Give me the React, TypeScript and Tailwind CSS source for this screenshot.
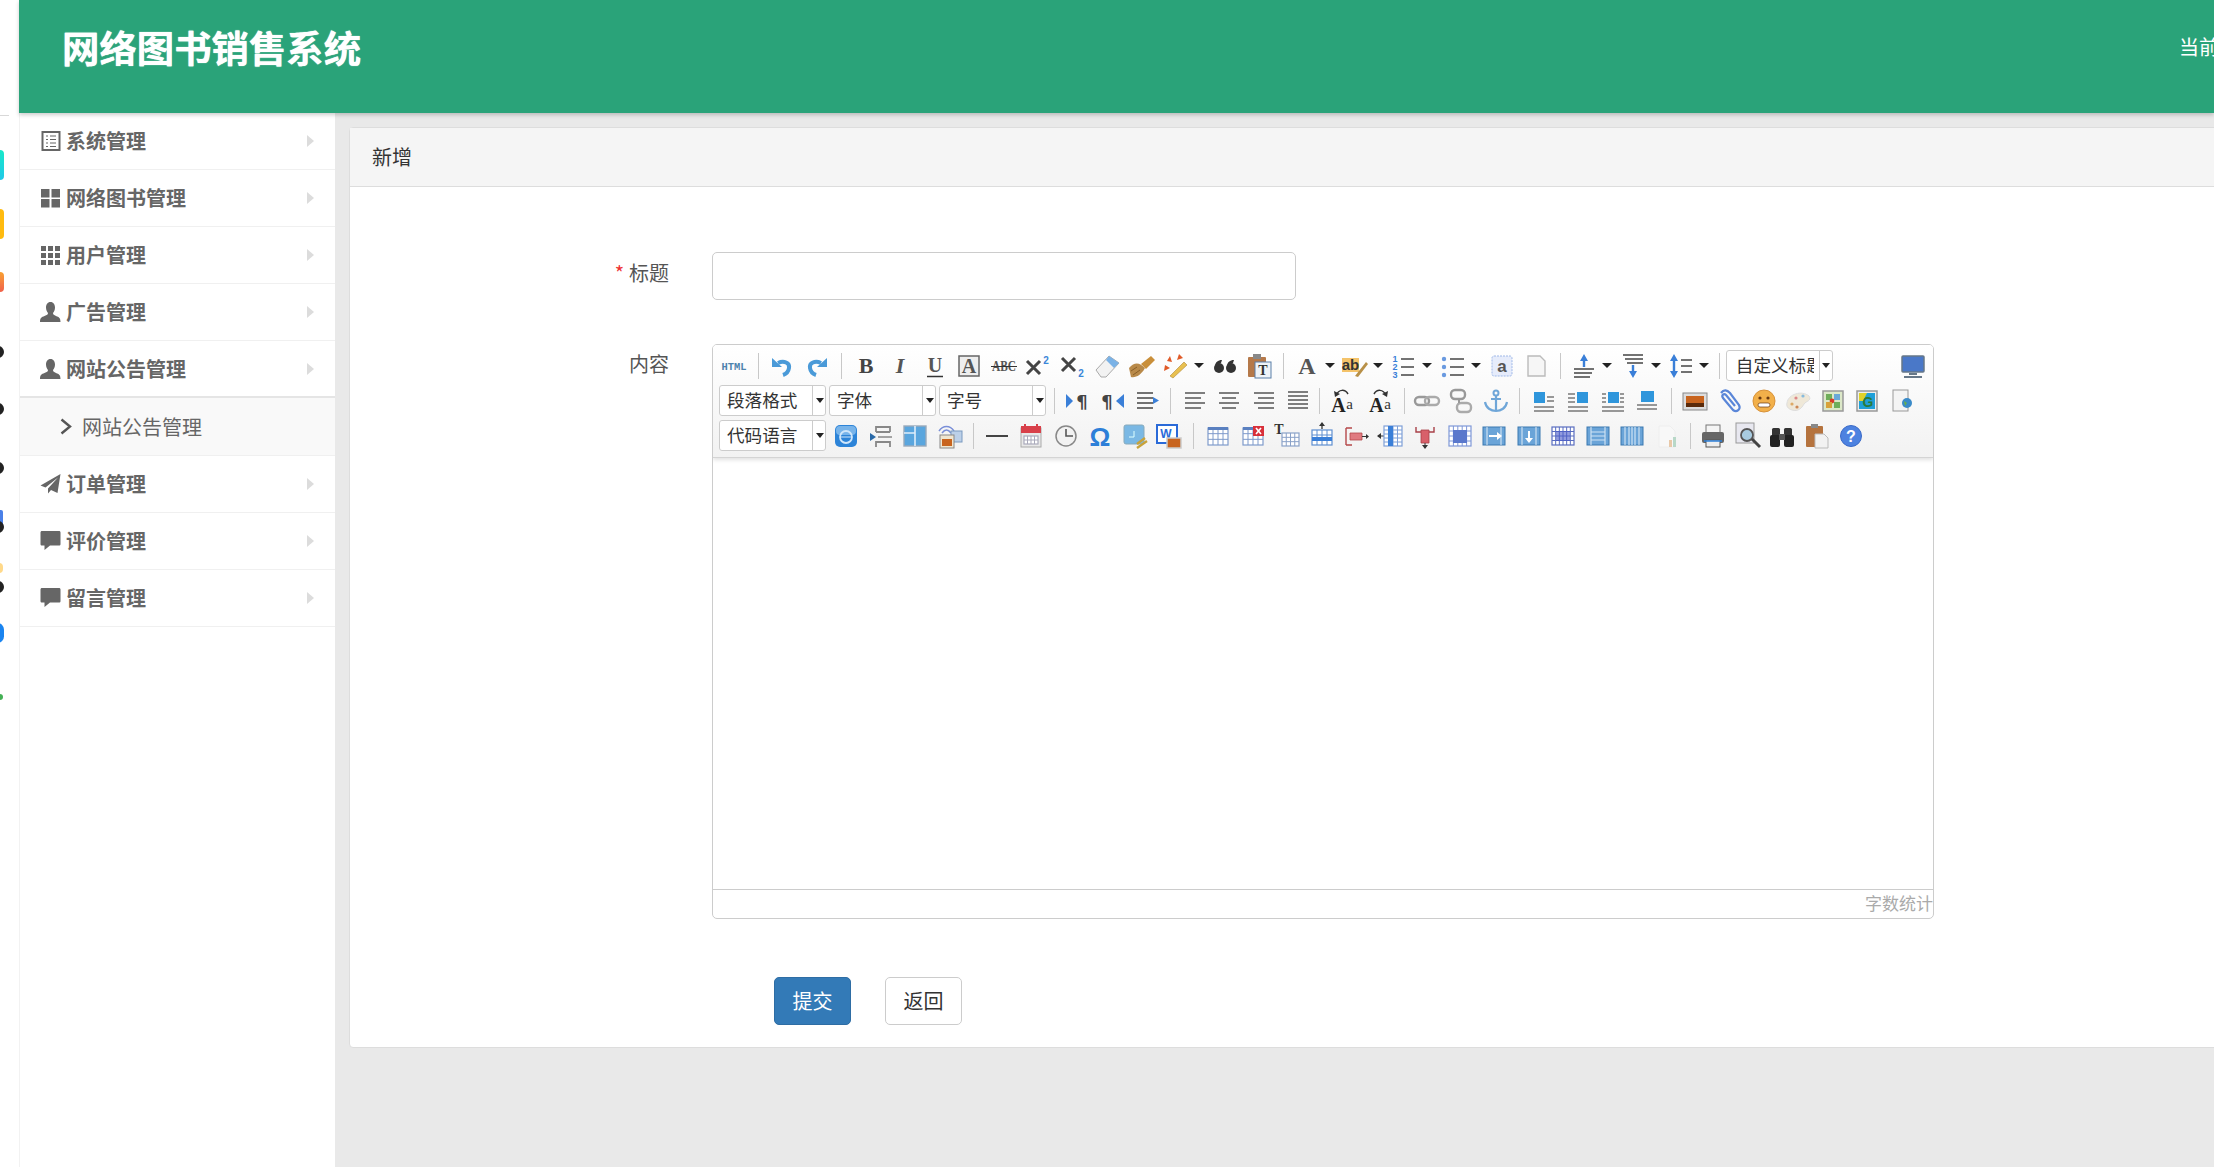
import React from "react";

const cjk = "font-['Noto_Sans_CJK_SC','Liberation_Sans',sans-serif]";

type IconProps = { children: React.ReactNode };

// toolbar glyphs are all drawn on a 28x28 box
const G = ({ children }: IconProps) => (
  <svg width="28" height="28" viewBox="0 0 28 28" fill="none">
    {children}
  </svg>
);

const Lines = ({ ys, x1 = 4, x2 = 24, c = "#555" }: { ys: number[]; x1?: number; x2?: number; c?: string }) => (
  <>
    {ys.map((y) => (
      <path key={y} d={`M${x1} ${y}H${x2}`} stroke={c} strokeWidth="1.6" />
    ))}
  </>
);

const Letter = ({ t, size = 20, c = "#444", style = "normal", weight = 700, y = 21 }: { t: string; size?: number; c?: string; style?: string; weight?: number; y?: number }) => (
  <text x="14" y={y} textAnchor="middle" fontSize={size} fontFamily="Liberation Serif" fontWeight={weight} fontStyle={style} fill={c}>
    {t}
  </text>
);

const grid = (x: number, y: number, w: number, h: number, cols: number, rows: number, c: string) => (
  <>
    <rect x={x} y={y} width={w} height={h} fill="#fff" stroke={c} strokeWidth="1.2" />
    {Array.from({ length: cols - 1 }).map((_, i) => (
      <path key={`c${i}`} d={`M${x + ((i + 1) * w) / cols} ${y}V${y + h}`} stroke={c} />
    ))}
    {Array.from({ length: rows - 1 }).map((_, i) => (
      <path key={`r${i}`} d={`M${x} ${y + ((i + 1) * h) / rows}H${x + w}`} stroke={c} />
    ))}
  </>
);

const tableIcon = (fill?: React.ReactNode) => (
  <G>
    {grid(4, 6, 20, 17, 4, 3, "#7f9bcb")}
    <rect x="4" y="5" width="20" height="3" fill="#5a80c0" />
    {fill}
  </G>
);

const filmIcon = (inner: React.ReactNode) => (
  <G>
    <rect x="3" y="5" width="22" height="18" fill="#6aa4d8" stroke="#3a78b0" />
    <path d="M7 5V23M21 5V23" stroke="#fff" strokeWidth=".8" />
    {inner}
  </G>
);

const layoutIcon = (box: [number, number, number, number], ys: [number, number, number][]) => (
  <G>
    {ys.map(([y, a, b]) => (
      <path key={y + "" + a} d={`M${a} ${y}H${b}`} stroke="#777" strokeWidth="1.5" />
    ))}
    <rect x={box[0]} y={box[1]} width={box[2]} height={box[3]} fill="#2f96dc" />
  </G>
);

const serifA = (
  <>
    <text x="10.5" y="25" textAnchor="middle" fontSize="20" fontWeight="700" fontFamily="Liberation Serif" fill="#222">A</text>
    <text x="21.5" y="22" textAnchor="middle" fontSize="15" fontFamily="Liberation Serif" fill="#333">a</text>
  </>
);

const icons: Record<string, React.ReactNode> = {
  html: (
    <svg width="28" height="28" viewBox="0 0 28 28">
      <text x="14" y="18" textAnchor="middle" fontSize="10" fontWeight="700" fontFamily="Liberation Mono" fill="#4d83ad" textLength="25" lengthAdjust="spacingAndGlyphs">HTML</text>
    </svg>
  ),
  undo: (
    <G>
      <path d="M10 11C16 8 22 11 21 16C20.500 19.500 18 22 15 23" stroke="#4a9ad8" strokeWidth="4" />
      <path d="M4 6V15H14Z" fill="#4a9ad8" />
    </G>
  ),
  redo: (
    <G>
      <path d="M18 11C12 8 6 11 7 16C7.500 19.500 10 22 13 23" stroke="#4a9ad8" strokeWidth="4" />
      <path d="M24 6V15H14Z" fill="#4a9ad8" />
    </G>
  ),
  bold: <G><Letter t="B" size={22} /></G>,
  italic: <G><Letter t="I" size={22} style="italic" c="#555" /></G>,
  underline: <G><Letter t="U" size={20} y={20} c="#555" weight={700} /><path d="M6 24.500H22" stroke="#333" strokeWidth="1.6" /></G>,
  fontborder: <G><rect x="4" y="4" width="20" height="20" fill="#eee" stroke="#666" strokeWidth="1.5" /><Letter t="A" size={20} y={21} c="#555" /></G>,
  strike: <G><text x="14" y="19" textAnchor="middle" fontSize="14" fontWeight="700" fontFamily="Liberation Serif" fill="#555" textLength="24" lengthAdjust="spacingAndGlyphs">ABC</text><path d="M1 14.500H27" stroke="#333" /></G>,
  sup: <G><path d="M3 9L16 22M16 9L3 22" stroke="#444" strokeWidth="3" /><text x="22" y="12" fontSize="10" fontWeight="700" fontFamily="Liberation Sans" fill="#3a86d8" textAnchor="middle">2</text></G>,
  sub: <G><path d="M3 6L16 19M16 6L3 19" stroke="#444" strokeWidth="3" /><text x="22" y="25" fontSize="10" fontWeight="700" fontFamily="Liberation Sans" fill="#3a86d8" textAnchor="middle">2</text></G>,
  eraser: <G><path d="M3 18L16 4L26 11L13 25H8Z" fill="#f2f2f2" stroke="#aaa" /><path d="M13 8L16 4L26 11L21 16Z" fill="#7ab2e6" /></G>,
  brush: <G><path d="M1 16C7 9 12 11 17 16C13 23 8 26 3 25Z" fill="#b98a4a" /><path d="M3 19L9 15M5 23L12 18" stroke="#8a6028" /><path d="M13 12L23 4L27 8L18 17Z" fill="#c98f3a" /></G>,
  magic: <G><path d="M8 24L22 10L25 13L11 26Z" fill="#e8c050" stroke="#b0883a" strokeWidth=".6" /><path d="M8 4L10 10L5 9ZM3 13L8 16L2 19ZM17 2L21 6L15 8Z" fill="#e05a28" /></G>,
  quote: (
    <G>
      <circle cx="8" cy="16" r="5" fill="#333" />
      <path d="M4 15C4 10 7 8 11 8L10 11C8 11 7 13 7 15Z" fill="#333" />
      <circle cx="20" cy="16" r="5" fill="#333" />
      <path d="M16 15C16 10 19 8 23 8L22 11C20 11 19 13 19 15Z" fill="#333" />
    </G>
  ),
  paste: <G><rect x="3" y="5" width="18" height="20" rx="1" fill="#b5794a" /><rect x="8" y="2" width="8" height="5" fill="#888" /><rect x="10" y="10" width="16" height="16" fill="#eef3f8" stroke="#5a7fa8" /><text x="18" y="23" textAnchor="middle" fontSize="14" fontWeight="700" fontFamily="Liberation Serif" fill="#333">T</text></G>,
  fontcolor: <G><Letter t="A" size={24} y={22} c="#555" /></G>,
  highlight: <G><rect x="1" y="6" width="17" height="14" fill="#f4c36a" /><text x="9.500" y="18" textAnchor="middle" fontSize="15" fontWeight="700" fontFamily="Liberation Sans" fill="#333">ab</text><path d="M14 24L25 10L27 12L17 25Z" fill="#b89048" /></G>,
  ol: <G><text x="5" y="10" fontSize="9" fontWeight="700" fill="#3a7fd8" fontFamily="Liberation Sans" textAnchor="middle">1</text><text x="5" y="18" fontSize="9" fontWeight="700" fill="#3a7fd8" fontFamily="Liberation Sans" textAnchor="middle">2</text><text x="5" y="26" fontSize="9" fontWeight="700" fill="#3a7fd8" fontFamily="Liberation Sans" textAnchor="middle">3</text><Lines ys={[7, 15, 23]} x1={11} x2={24} c="#444" /></G>,
  ul: <G><circle cx="5" cy="7" r="2.2" fill="#6a9ae0" /><circle cx="5" cy="15" r="2.2" fill="#6a9ae0" /><circle cx="5" cy="23" r="2.2" fill="#6a9ae0" /><Lines ys={[7, 15, 23]} x1={11} x2={25} c="#444" /></G>,
  selectall: <G><rect x="4" y="4" width="20" height="20" rx="2" fill="#e6ecfb" stroke="#9fb8e8" strokeDasharray="2 1" /><text x="14" y="20" textAnchor="middle" fontSize="17" fontWeight="700" fontFamily="Liberation Sans" fill="#555">a</text></G>,
  doc: <G><path d="M6 4H18L23 9V24H6Z" fill="#f6f6f6" stroke="#bbb" strokeWidth="1.4" /></G>,
  rowtop: <G><path d="M14 2L18 9H15.200V15H12.800V9H10Z" fill="#3a7fd8" /><path d="M4 17H24M4 21H22M4 25H20" stroke="#444" strokeWidth="1.6" /></G>,
  rowbottom: <G><path d="M4 3H24M6 7H24M8 11H24" stroke="#444" strokeWidth="1.6" /><path d="M14 26L18 19H15.200V13H12.800V19H10Z" fill="#3a7fd8" /></G>,
  lineheight: <G><path d="M7 2L11 9H8.200V19H11L7 26L3 19H5.800V9H3Z" fill="#3a7fd8" /><Lines ys={[8, 14, 20]} x1={14} x2={25} c="#444" /></G>,
  full: <G><rect x="3" y="4" width="22" height="16" rx="1" fill="#4a78c8" stroke="#678" strokeWidth="1.5" /><path d="M10 22H18M5 25H23" stroke="#678" strokeWidth="2" /></G>,
  ltr: <G><path d="M2 7L9 14L2 21Z" fill="#3a7fd8" /><text x="18" y="21" textAnchor="middle" fontSize="18" fontWeight="700" fontFamily="DejaVu Sans" fill="#444">¶</text></G>,
  rtl: <G><text x="9" y="21" textAnchor="middle" fontSize="18" fontWeight="700" fontFamily="DejaVu Sans" fill="#444">¶</text><path d="M26 7L18 14L26 21Z" fill="#3a7fd8" /></G>,
  indent: <G><Lines ys={[6, 11, 16, 21]} x1={4} x2={20} c="#444" /><path d="M20 10L26 13.500L20 17Z" fill="#3a7fd8" /></G>,
  left: <G><path d="M4 6H24M4 11H20M4 16H24M4 21H20" stroke="#555" strokeWidth="1.6" /></G>,
  center: <G><Lines ys={[6, 16]} x1={4} x2={24} c="#555" /><Lines ys={[11, 21]} x1={7} x2={21} c="#555" /></G>,
  right: <G><Lines ys={[6, 16]} x1={4} x2={24} c="#555" /><Lines ys={[11, 21]} x1={8} x2={24} c="#555" /></G>,
  justify: <G><Lines ys={[5, 9, 13, 17, 21]} x1={4} x2={24} c="#555" /></G>,
  upper: <G>{serifA}<path d="M8 8C11 2 17 2 20 7" stroke="#333" fill="none" strokeWidth="1.5" /><path d="M6 4L7 10L12 7Z" fill="#333" /></G>,
  lower: <G>{serifA}<path d="M8 7C11 2 17 2 20 8" stroke="#333" fill="none" strokeWidth="1.5" /><path d="M22 4L21 10L16 7Z" fill="#333" /></G>,
  link: <G><rect x="2" y="10" width="14" height="8" rx="4" stroke="#999" strokeWidth="2.4" /><rect x="12" y="10" width="14" height="8" rx="4" stroke="#aaa" strokeWidth="2.4" /></G>,
  unlink: <G><rect x="4" y="3" width="14" height="9" rx="4" stroke="#999" strokeWidth="2.4" /><rect x="10" y="16" width="14" height="9" rx="4" stroke="#aaa" strokeWidth="2.4" /><path d="M12 12V16" stroke="#999" strokeWidth="2" /></G>,
  anchor: <G><circle cx="14" cy="6" r="2.500" stroke="#6fa6d8" strokeWidth="2" /><path d="M14 8V24M9 12H19M3 15C4 21 9 24 14 24C19 24 24 21 25 15" stroke="#6fa6d8" strokeWidth="2.2" /></G>,
  floatLeft: layoutIcon([4, 5, 11, 11], [[20, 4, 24], [24, 4, 24], [10, 17, 24], [14, 17, 24]]),
  floatRight: layoutIcon([13, 5, 11, 11], [[20, 4, 24], [24, 4, 24], [7, 4, 11], [11, 4, 11], [15, 4, 11]]),
  floatCenter: layoutIcon([9, 5, 11, 11], [[20, 3, 25], [24, 3, 25], [7, 3, 7], [11, 3, 7], [15, 3, 7], [7.100, 21, 25], [11.100, 21, 25], [15.100, 21, 25]]),
  floatNone: layoutIcon([8, 4, 13, 11], [[18, 4, 24], [22, 4, 24]]),
  image: <G><rect x="2" y="6" width="24" height="17" fill="#ddd" stroke="#888" /><rect x="5" y="9" width="18" height="11" fill="#c8641e" /><path d="M5 16H23V20H5Z" fill="#5a2a0a" /></G>,
  attach: <G><path d="M6 6C9 2 12 3 15 6L24 18C26 22 22 26 18 23L8 11C6 8 9 6 11 8L20 19" stroke="#5a86d8" strokeWidth="2.2" /></G>,
  emoji: <G><circle cx="14" cy="14" r="11" fill="#f2b04a" stroke="#d8923a" /><circle cx="10" cy="11" r="1.600" fill="#6a3a10" /><circle cx="18" cy="11" r="1.600" fill="#6a3a10" /><rect x="8" y="16" width="12" height="4" rx="2" fill="#fff" stroke="#6a3a10" strokeWidth=".7" /></G>,
  palette: <G><path d="M3 16C4 7 18 3 25 9C28 14 22 14 20 17C18 21 14 25 8 23C4 22 2 19 3 16Z" fill="#efe8d8" stroke="#ddd" /><circle cx="12" cy="11" r="1.600" fill="#d88" /><circle cx="19" cy="9" r="1.600" fill="#8bd" /><circle cx="8" cy="17" r="1.600" fill="#da6" /><circle cx="13" cy="20" r="1.600" fill="#c85" /></G>,
  map: <G><rect x="4" y="4" width="20" height="20" fill="#dce8c8" stroke="#999" strokeWidth="1.5" /><path d="M7 7H13V13H7ZM15 15H21V21H15Z" fill="#6fae5a" /><path d="M15 7H21V13H15Z" fill="#6aa8d8" /><circle cx="13" cy="14" r="2.400" fill="#d83a2a" /><path d="M7 15H13V21H7Z" fill="#d8a23a" /></G>,
  gmap: <G><rect x="4" y="4" width="20" height="20" fill="#eee" stroke="#999" strokeWidth="1.5" /><rect x="6" y="6" width="16" height="16" fill="#1fa0d8" /><path d="M6 6H14L10 14H6Z" fill="#e0d22a" /><text x="15" y="20" textAnchor="middle" fontSize="14" fontWeight="700" fontFamily="Liberation Sans" fill="#2a7a3a">G</text></G>,
  iframe: <G><rect x="5" y="3" width="15" height="21" fill="#f4f4f4" stroke="#999" /><circle cx="19" cy="16" r="5" fill="#3a8ac8" /><path d="M16 14L19 16L17 19Z" fill="#6ab04a" /></G>,
  webapp: <G><rect x="3" y="3" width="22" height="22" rx="5" fill="#2d84d8" /><rect x="4" y="4" width="20" height="9" rx="4" fill="#78b4ea" /><circle cx="14" cy="15" r="6" stroke="#cfe6fa" strokeWidth="1.8" /><path d="M8 15H20" stroke="#cfe6fa" /></G>,
  pagebreak: <G><path d="M9 10V5H23V10M9 10H23" stroke="#888" strokeWidth="1.8" /><path d="M9 25V20H23V25" stroke="#888" strokeWidth="1.8" /><path d="M11 15H25" stroke="#888" strokeWidth="1.6" /><path d="M3 11L9 15L3 19Z" fill="#2a6aa8" /></G>,
  template: <G><rect x="3" y="4" width="22" height="20" fill="#5aa6de" stroke="#9ab" strokeWidth="1.4" /><path d="M14 4V24M3 11H14" stroke="#dfeefa" strokeWidth="1.6" /></G>,
  wifi: <G><path d="M3 9C7 3 14 3 18 9M6 11C9 7 12 7 15 11" stroke="#7a8fd8" strokeWidth="1.5" /><rect x="15" y="9" width="11" height="11" fill="#bcd0e8" stroke="#7a9ac0" /><rect x="4" y="13" width="14" height="13" fill="#f0e6d0" stroke="#888" /><rect x="6" y="17" width="10" height="7" fill="#c8641e" /></G>,
  hr: <G><path d="M3 14H25" stroke="#444" strokeWidth="2" /></G>,
  date: <G><rect x="4" y="6" width="20" height="19" fill="#e8e8e8" stroke="#aaa" /><rect x="4" y="4" width="20" height="7" fill="#d8404a" /><path d="M8 2V7M20 2V7" stroke="#d8404a" strokeWidth="2" />{grid(7, 14, 14, 8, 4, 2, "#aab")}</G>,
  clock: <G><circle cx="14" cy="14" r="10" fill="#f2f2f2" stroke="#888" strokeWidth="1.5" /><path d="M14 7V14H21" stroke="#555" strokeWidth="1.6" /></G>,
  omega: <G><text x="14" y="24" textAnchor="middle" fontSize="26" fontWeight="700" fontFamily="Liberation Sans" fill="#2d7fd8">Ω</text></G>,
  scrawl: <G><rect x="3" y="3" width="20" height="19" rx="2" fill="#7ab8e4" stroke="#8ab" /><path d="M8 15H13V9" stroke="#dff" /><path d="M16 22L24 16M16 26L26 19" stroke="#c8a23a" strokeWidth="2.4" /></G>,
  word: <G><rect x="2" y="3" width="20" height="18" fill="#fff" stroke="#2a6ad8" strokeWidth="2" /><text x="11" y="16" textAnchor="middle" fontSize="12" fontWeight="700" fontFamily="Liberation Sans" fill="#2a6ad8">W</text><rect x="12" y="16" width="14" height="10" fill="#c8641e" stroke="#ccc" strokeWidth="1.5" /></G>,
  table: tableIcon(),
  tabledel: tableIcon(<><rect x="14" y="4" width="11" height="10" fill="#d8303a" /><path d="M17 6L22 12M22 6L17 12" stroke="#fff" strokeWidth="1.6" /></>),
  tabletitle: <G><text x="6" y="12" textAnchor="middle" fontSize="14" fontWeight="700" fontFamily="Liberation Serif" fill="#333">T</text>{grid(9, 11, 17, 13, 4, 3, "#8aa2c8")}</G>,
  rowadd: <G><path d="M14 1V7" stroke="#333" strokeWidth="1.3" /><path d="M11 4L14 0L17 4Z" fill="#333" />{grid(4, 8, 20, 15, 4, 3, "#5f8fd0")}<rect x="4" y="15" width="20" height="4" fill="#3a7fd8" /></G>,
  rowdel: <G><path d="M4 6V23M4 6H10M4 23H10" stroke="#b5484a" strokeWidth="1.4" /><path d="M8 11H20V18H8Z" fill="#e07a80" stroke="#b5484a" strokeWidth=".8" /><path d="M20 14.500H26" stroke="#333" /><path d="M24 12L27 14.500L24 17Z" fill="#333" /></G>,
  coladd: <G><path d="M7 14H1" stroke="#333" /><path d="M4 11L0 14L4 17Z" fill="#333" />{grid(7, 4, 18, 20, 4, 5, "#7fa0d8")}<rect x="11" y="4" width="5" height="20" fill="#3a7fd8" /></G>,
  coldel: <G><path d="M5 5V10H23V5" stroke="#a84048" strokeWidth="1.4" /><path d="M10 8H18V21H10Z" fill="#d8606a" stroke="#a84048" strokeWidth=".8" /><path d="M14 21V26" stroke="#333" /><path d="M11 23L14 27L17 23Z" fill="#333" /></G>,
  merge: <G>{grid(3, 4, 22, 20, 5, 4, "#7f98d8")}<rect x="7" y="8" width="14" height="13" fill="#5a78cc" /></G>,
  mergeR: filmIcon(<><path d="M9 14H19" stroke="#fff" strokeWidth="2" /><path d="M17 10L22 14L17 18Z" fill="#fff" /></>),
  mergeD: filmIcon(<><path d="M14 9V18" stroke="#fff" strokeWidth="2" /><path d="M10 16L14 21L18 16Z" fill="#fff" /></>),
  split: <G>{grid(3, 5, 22, 18, 6, 4, "#5a6ec0")}<rect x="7" y="9" width="14" height="10" fill="#4a5ac8" opacity=".6" /></G>,
  splitR: filmIcon(<path d="M7 10H21M7 14H21M7 18H21" stroke="#cfe4f6" strokeWidth="1.2" />),
  splitC: filmIcon(<path d="M11 5V23M14 5V23M17 5V23" stroke="#cfe4f6" strokeWidth="1.2" />),
  chart: <G><path d="M6 4H17L22 9V25H6Z" fill="#f8f8f8" stroke="#eee" /><rect x="16" y="18" width="3" height="7" fill="#e8c8a8" /><rect x="20" y="15" width="3" height="10" fill="#b8d8c8" /></G>,
  print: <G><rect x="7" y="3" width="14" height="8" fill="#f4f4f4" stroke="#777" /><rect x="3" y="10" width="22" height="11" rx="2" fill="#666" /><rect x="7" y="18" width="14" height="7" fill="#eee" stroke="#555" /><path d="M5 19H23" stroke="#2d7fd8" strokeWidth="1.5" /></G>,
  preview: <G><rect x="2" y="1" width="18" height="20" fill="#e8e8f0" stroke="#999" /><circle cx="13" cy="13" r="6" fill="#a8cbe0" stroke="#555" strokeWidth="1.8" /><path d="M18 17L26 25" stroke="#444" strokeWidth="3" /></G>,
  search: <G><rect x="4" y="6" width="8" height="9" rx="1.500" fill="#333" /><rect x="16" y="6" width="8" height="9" rx="1.500" fill="#333" /><rect x="2" y="13" width="10" height="12" rx="2" fill="#222" /><rect x="16" y="13" width="10" height="12" rx="2" fill="#222" /><rect x="11" y="12" width="6" height="6" fill="#555" /></G>,
  clip: <G><rect x="3" y="4" width="17" height="21" rx="1" fill="#b5733e" /><rect x="8" y="2" width="7" height="4" fill="#888" /><path d="M12 12H21L25 16V26H12Z" fill="#f2f2f2" stroke="#bbb" /></G>,
  help: <G><circle cx="14" cy="14" r="10.500" fill="#4d82e0" stroke="#3a6ac8" /><text x="14" y="20" textAnchor="middle" fontSize="16" fontWeight="700" fontFamily="Liberation Sans" fill="#fff">?</text></G>,
};

const Btn = ({ name, wide }: { name: string; wide?: boolean }) => (
  <div className={`flex h-[34px] shrink-0 items-center justify-center ${wide ? "w-[38px]" : "w-[34.5px]"}`}>{icons[name]}</div>
);

const Combo = ({ name }: { name: string }) => (
  <div className="flex h-[34px] w-[48.6px] shrink-0 items-center pl-[3px]">
    {icons[name]}
    <span className="ml-[4px] h-0 w-0 border-x-[5px] border-t-[5px] border-x-transparent border-t-[#222]" />
  </div>
);

const Sep = ({ w = 13.4 }: { w?: number }) => (
  <div className="flex shrink-0 justify-center" style={{ width: w }}>
    <div className="h-[26px] w-px bg-[#c8c8c8]" />
  </div>
);

const Pick = ({ label, custom }: { label: string; custom?: boolean }) => (
  <div className="mr-[3px] flex h-[31px] w-[107px] shrink-0 items-center rounded-[3px] border border-[#ccc] bg-white text-[17.6px] text-[#333]">
    <span className={`min-w-0 flex-1 overflow-hidden whitespace-nowrap ${custom ? "mr-[5px] ml-[9px]" : "pl-[7px]"}`}>{label}</span>
    <span className="flex h-full w-[13px] shrink-0 items-center justify-center border-l border-[#ccc] pl-[1px]">
      <span className="h-0 w-0 border-x-[4px] border-t-[5px] border-x-transparent border-t-[#222]" />
    </span>
  </div>
);

const Toolbar = () => (
  <div className="h-[113px] border-b border-[#d4d4d4] bg-gradient-to-b from-white to-[#f2f2f2] pt-[3px] pl-[4px] shadow-[0_2px_4px_rgba(0,0,0,0.12)]">
    <div className="flex h-[35px] items-center">
      <Btn name="html" />
      <Sep />
      <Btn name="undo" /><Btn name="redo" />
      <Sep w={14.5} />
      {["bold", "italic", "underline", "fontborder", "strike", "sup", "sub", "eraser", "brush"].map((n) => <Btn key={n} name={n} />)}
      <Combo name="magic" />
      <Btn name="quote" /><Btn name="paste" />
      <Sep />
      <Combo name="fontcolor" /><Combo name="highlight" /><Combo name="ol" /><Combo name="ul" />
      <Btn name="selectall" /><Btn name="doc" />
      <Sep w={14} />
      <Combo name="rowtop" /><Combo name="rowbottom" /><Combo name="lineheight" />
      <Sep w={12.8} />
      <Pick label="自定义标题" custom />
      <div className="ml-[60px]"><Btn name="full" /></div>
    </div>
    <div className="flex h-[35px] items-center pl-[2px]">
      <Pick label="段落格式" /><Pick label="字体" /><Pick label="字号" />
      <Sep w={11.7} />
      <Btn name="ltr" /><Btn name="rtl" /><Btn name="indent" />
      <Sep w={13.5} />
      <Btn name="left" /><Btn name="center" /><Btn name="right" /><Btn name="justify" />
      <Sep w={7.3} />
      <Btn name="upper" wide /><Btn name="lower" wide />
      <Sep w={10.7} />
      <Btn name="link" /><Btn name="unlink" /><Btn name="anchor" />
      <Sep w={13.5} />
      <Btn name="floatLeft" /><Btn name="floatRight" /><Btn name="floatCenter" /><Btn name="floatNone" />
      <Sep w={13} />
      <Btn name="image" /><Btn name="attach" /><Btn name="emoji" /><Btn name="palette" /><Btn name="map" /><Btn name="gmap" /><Btn name="iframe" />
    </div>
    <div className="flex h-[35px] items-center pl-[2px]">
      <Pick label="代码语言" />
      <Btn name="webapp" /><Btn name="pagebreak" /><Btn name="template" /><Btn name="wifi" />
      <Sep w={12.7} />
      {["hr", "date", "clock", "omega", "scrawl", "word"].map((n) => <Btn key={n} name={n} />)}
      <Sep w={14.5} />
      {["table", "tabledel", "tabletitle", "rowadd", "rowdel", "coladd", "coldel", "merge", "mergeR", "mergeD", "split", "splitR", "splitC", "chart"].map((n) => <Btn key={n} name={n} />)}
      <Sep w={12} />
      {["print", "preview", "search", "clip", "help"].map((n) => <Btn key={n} name={n} />)}
    </div>
  </div>
);

// glyphicon-style menu icons
const menuIcons: Record<string, React.ReactNode> = {
  list: (
    <svg width="20" height="20" viewBox="0 0 20 20">
      <rect x="1.5" y="1" width="17" height="18" fill="none" stroke="#666" strokeWidth="2" />
      <path d="M5 5H7M9 5H15M5 8.5H7M9 8.5H15M5 12H7M9 12H15M5 15.5H7M9 15.5H15" stroke="#666" />
    </svg>
  ),
  large: (
    <svg width="20" height="20" viewBox="0 0 20 20" fill="#666">
      <rect x="0" y="1" width="8.5" height="8.5" /><rect x="10.5" y="1" width="8.5" height="8.5" />
      <rect x="0" y="11" width="8.5" height="8.5" /><rect x="10.5" y="11" width="8.5" height="8.5" />
    </svg>
  ),
  small: (
    <svg width="20" height="20" viewBox="0 0 20 20" fill="#666">
      {[0, 7, 14].map((x) => [1, 8, 15].map((y) => <rect key={`${x}-${y}`} x={x} y={y} width="5" height="5" />))}
    </svg>
  ),
  user: (
    <svg width="21" height="20" viewBox="0 0 21 20" fill="#666">
      <path d="M10.5 0C13.5 0 15 2.5 15 5.5C15 8 14 10 13 11C13 12.5 14 13 16 14C19 15 20.5 16 20.5 20H0C0 16 1.5 15 4.5 14C7 13 8 12.5 8 11C7 10 6 8 6 5.5C6 2.5 7.5 0 10.5 0Z" />
    </svg>
  ),
  send: (
    <svg width="21" height="20" viewBox="0 0 21 20" fill="#666">
      <path d="M20.5 0L0.5 11.5L5.5 13.5L18 3.5L8 14.5V19.5L11 16L17.5 19Z" />
    </svg>
  ),
  comment: (
    <svg width="21" height="20" viewBox="0 0 21 20" fill="#666">
      <path d="M2 0H19C20 0 20.5 .6 20.5 1.5V13C20.5 14 20 14.5 19 14.5H10L4.5 19V14.5H2C1 14.5 .5 14 .5 13V1.5C.5 .6 1 0 2 0Z" />
    </svg>
  ),
};

const menu = [
  { icon: "list", label: "系统管理" },
  { icon: "large", label: "网络图书管理" },
  { icon: "small", label: "用户管理" },
  { icon: "user", label: "广告管理" },
  { icon: "user", label: "网站公告管理", open: true },
  { icon: "send", label: "订单管理" },
  { icon: "comment", label: "评价管理" },
  { icon: "comment", label: "留言管理" },
];

const MenuItem = ({ icon, label, open }: { icon: string; label: string; open?: boolean }) => (
  <>
    <div className={`flex h-[57.1px] items-center pl-[20px] ${open ? "border-b-2 border-[#e5e5e5]" : "border-b border-[#f0f0f0]"}`}>
      <span className="flex w-[21px] shrink-0 justify-center">{menuIcons[icon]}</span>
      <span className="ml-[5px] text-[20px] font-bold text-[#666]">{label}</span>
      <span className="mr-[21px] ml-auto h-0 w-0 border-y-[6.5px] border-l-[7px] border-y-transparent border-l-[#dcdcdc]" />
    </div>
    {open && (
      <div className="flex h-[57.1px] items-center border-b border-[#f0f0f0] bg-[#f9f9f9] pl-[40px] text-[#666]">
        <svg width="12" height="17" viewBox="0 0 12 17" fill="none">
          <path d="M1.5 1.5L10 8.5L1.5 15.5" stroke="#555" strokeWidth="2.4" />
        </svg>
        <span className="ml-[10px] text-[20px]">网站公告管理</span>
      </div>
    )}
  </>
);

const Dot = ({ top, className }: { top: string; className: string }) => (
  <span className={`absolute ${top} ${className}`} />
);

export default function App() {
  return (
    <div className={`relative flex h-[1167px] w-[2214px] overflow-hidden bg-white ${cjk}`}>
      {/* sliver of whatever window sits behind the page */}
      <div className="relative w-[19px] shrink-0 overflow-hidden bg-white">
        <div className="absolute top-[115px] left-0 h-px w-[9px] bg-[#d8d8d8]" />
        <Dot top="top-[150px]" className="left-[-8px] h-[30px] w-[12px] rounded-[4px] bg-gradient-to-b from-[#18e8c8] to-[#22c8e8]" />
        <Dot top="top-[209px]" className="left-[-8px] h-[30px] w-[12px] rounded-[4px] bg-[#ffbb0f]" />
        <Dot top="top-[272px]" className="left-[-6px] h-[20px] w-[10px] rounded-[4px] bg-gradient-to-b from-[#f8a030] to-[#f0604a]" />
        <Dot top="top-[510px]" className="left-[-6px] h-[18px] w-[9px] rounded-[2px] bg-[#4a80e8]" />
        {[346, 403, 462, 521, 581].map((y) => (
          <span key={y} className="absolute left-[-8px] h-[12px] w-[12px] rounded-full bg-[#222]" style={{ top: y }} />
        ))}
        <Dot top="top-[563px]" className="left-[-5px] h-[10px] w-[8px] rounded-full bg-[#ffd98a]" />
        <Dot top="top-[623px]" className="left-[-9px] h-[20px] w-[13px] rounded-full bg-[#1a84f0]" />
        <Dot top="top-[694px]" className="left-[-3px] h-[6px] w-[6px] rounded-full bg-[#44b055]" />
      </div>

      <div className="flex min-w-0 flex-1 flex-col">
        <header className="z-10 flex h-[113px] shrink-0 items-start overflow-hidden bg-[#2aa379] pt-[28px] pl-[43px] text-white shadow-[0_2px_4px_rgba(0,0,0,0.2)]">
          <h1 className="w-[2117px] shrink-0 text-[37.4px] leading-[38px] font-bold whitespace-nowrap [text-shadow:0_0_1px_#fff]">网络图书销售系统</h1>
          <span className="text-[20px] leading-[38px] whitespace-nowrap">当前用户：admin</span>
        </header>

        <div className="flex min-h-0 flex-1">
          <aside className="w-[316px] shrink-0 border-l border-[#f2f2f2] bg-white shadow-[1px_0_2px_rgba(0,0,0,0.08)]">
            {menu.map((m) => (
              <MenuItem key={m.label} {...m} />
            ))}
          </aside>

          <main className="min-w-0 flex-1 bg-[#e9e9e9] pt-[14px] pl-[14px]">
            <div className="h-[921px] w-[1900px] rounded-tl-[4px] rounded-bl-[4px] border border-[#ddd] bg-white">
              <div className="flex h-[59px] items-center border-b border-[#ddd] bg-[#f5f5f5] pl-[22px] text-[20px] text-[#333]">新增</div>
              <div className="pt-[65px]">
                <div className="flex h-[48px]">
                  <label className="flex h-[42px] w-[319px] shrink-0 items-center justify-end text-[20px] text-[#555]">
                    <span className="mr-[5px] text-[#e33]">*</span>标题
                  </label>
                  <div className="ml-[43px] h-[48px] w-[584px] rounded-[5px] border border-[#ccc] bg-white" />
                </div>
                <div className="mt-[44px] flex">
                  <label className="flex h-[40px] w-[319px] shrink-0 items-center justify-end text-[20px] text-[#555]">内容</label>
                  <div className="ml-[43px] h-[575px] w-[1222px] overflow-hidden rounded-[5px] border border-[#ccc] bg-white">
                    <Toolbar />
                    <div className="h-[431px]" />
                    <div className="flex h-[29px] items-start justify-end border-t border-[#ccc] text-[17px] leading-[25px] text-[#aaa]">字数统计</div>
                  </div>
                </div>
                <div className="mt-[58px] flex pl-[424px]">
                  <button className="h-[48px] w-[77px] rounded-[5px] border border-[#2e6da4] bg-[#337ab7] text-[20px] text-white">提交</button>
                  <button className="ml-[34px] h-[48px] w-[77px] rounded-[5px] border border-[#ccc] bg-white text-[20px] text-[#333]">返回</button>
                </div>
              </div>
            </div>
          </main>
        </div>
      </div>
    </div>
  );
}
